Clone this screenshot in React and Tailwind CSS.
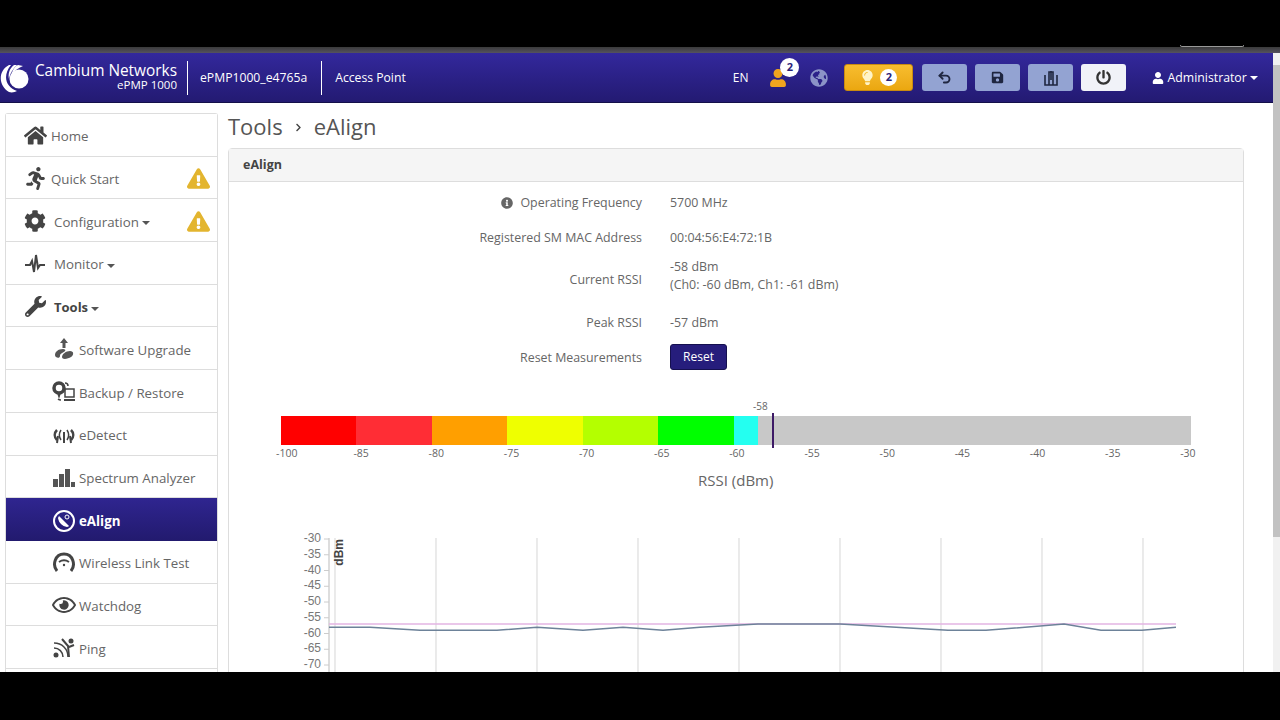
import React from "react";
import { FaHome, FaRunning, FaCog, FaWrench, FaExclamationTriangle, FaUser, FaGlobeAmericas, FaLightbulb, FaSave, FaPowerOff, FaInfoCircle, FaRegEye, FaChevronRight } from "react-icons/fa";
import { Undo2 } from "lucide-react";

const font = "font-['Open_Sans',sans-serif]";

function Caret({ className = "" }) {
  return <span className={`inline-block w-0 h-0 ml-[3px] align-middle border-x-[4px] border-x-transparent border-t-[4px] ${className}`} />;
}

function Logo() {
  return (
    <svg width="30" height="30" viewBox="0 0 30 30" className="shrink-0">
      <circle cx="19" cy="16" r="9.5" fill="#fff" />
      <path d="M9 2 C-2 8 -2 22 9 29 C12 30 15 29 17 28 C6 24 2 13 11 2Z" fill="#fff" />
      <path d="M14 2 C9 6 8 11 9 16 C10 10 13 6 17 2Z" fill="#fff" />
      <path d="M18 2 C14 4 12 8 12 11 C14 8 18 5 23 3Z" fill="#fff" />
    </svg>
  );
}

function Pulse() {
  return (
    <svg width="22" height="22" viewBox="0 0 22 22"><path d="M1 12h5l2-4 2 11 2-17 2 13 2-3h5" fill="none" stroke="#444" strokeWidth="2" /></svg>
  );
}

function Upgrade() {
  return (
    <svg width="24" height="24" viewBox="0 0 24 24" fill="#555">
      <path d="M12 1l4 5h-2.5v5h-3V6H8z" />
      <path d="M3 18c0-3 3-6 8-6 2 0 3 1 2 2-2 2-5 2-5 5 0 3-5 2-5-1z" />
      <path d="M10 20c0-3 4-6 8-6 4 0 4 4 1 6-3 2-9 3-9 0z" />
    </svg>
  );
}

function Backup() {
  return (
    <svg width="24" height="24" viewBox="0 0 24 24">
      <circle cx="7" cy="8" r="5" fill="none" stroke="#444" strokeWidth="3.5" />
      <path d="M5 13l2 6 2-6z" fill="#444" />
      <path d="M13 3c2 0 3 1 3 3M9 20c-2 0-3-1-3-1" fill="none" stroke="#444" strokeWidth="1.5" />
      <rect x="13" y="9" width="9" height="8" fill="none" stroke="#444" strokeWidth="1.5" />
      <path d="M12 20h11" stroke="#444" strokeWidth="2" />
    </svg>
  );
}

function Detect() {
  return (
    <svg width="24" height="24" viewBox="0 0 24 24" fill="none" stroke="#444">
      <path d="M5 7C2 10 2 14 5 17M19 7c3 3 3 7 0 10" strokeWidth="2.5" />
      <path d="M9 7c-2 3-2 7 0 10M15 7c2 3 2 7 0 10" strokeWidth="1.5" />
      <path d="M12 9v11M6 13l-1 7M18 13l1 7" strokeWidth="2" />
    </svg>
  );
}

function Spectrum() {
  return (
    <svg width="24" height="24" viewBox="0 0 24 24" fill="#555">
      <rect x="1" y="14" width="5" height="8" />
      <rect x="7" y="9" width="5" height="13" />
      <rect x="13" y="4" width="5" height="18" />
      <rect x="19" y="17" width="4" height="5" />
    </svg>
  );
}

function Dish() {
  return (
    <svg width="24" height="24" viewBox="0 0 24 24">
      <circle cx="12" cy="12" r="10" fill="none" stroke="#fff" strokeWidth="2" />
      <path d="M6 9c1 5 4 8 9 9 1 0 2-1 2-1L7 7z" fill="#fff" />
      <circle cx="15" cy="8" r="2" fill="none" stroke="#fff" strokeWidth="1" />
    </svg>
  );
}

function Gauge() {
  return (
    <svg width="24" height="24" viewBox="0 0 24 24" fill="none" stroke="#444">
      <path d="M5 20C0 14 3 3 12 3s12 11 7 17" strokeWidth="3" />
      <path d="M7 11c3-2 7-2 10 0" strokeWidth="2" />
      <circle cx="12" cy="14" r="1.2" fill="#444" stroke="none" />
    </svg>
  );
}

function Ping() {
  return (
    <svg width="24" height="24" viewBox="0 0 24 24" fill="none" stroke="#444" strokeWidth="1.5">
      <circle cx="4" cy="19" r="2.5" fill="#444" stroke="none" />
      <path d="M2 12c5 0 9 4 9 9M2 7c8 0 14 6 14 14" />
      <circle cx="19" cy="5" r="2.5" fill="#444" stroke="none" />
      <path d="M10 3l6 7 1 11M22 9l-5 2" strokeWidth="2" />
    </svg>
  );
}

const menu = [
  { label: "Home", icon: <FaHome size={23} color="#444" />, gap: "ml-[4px]" },
  { label: "Quick Start", icon: <FaRunning size={23} color="#444" />, gap: "ml-[4px]", warn: true },
  { label: "Configuration", icon: <FaCog size={22} color="#444" />, gap: "ml-[7px]", warn: true, caret: true },
  { label: "Monitor", icon: <Pulse />, gap: "ml-[7px]", caret: true },
  { label: "Tools", icon: <FaWrench size={21} color="#444" />, gap: "ml-[7px]", caret: true, bold: true },
  { label: "Software Upgrade", icon: <Upgrade />, sub: true },
  { label: "Backup / Restore", icon: <Backup />, sub: true },
  { label: "eDetect", icon: <Detect />, sub: true },
  { label: "Spectrum Analyzer", icon: <Spectrum />, sub: true },
  { label: "eAlign", icon: <Dish />, sub: true, active: true },
  { label: "Wireless Link Test", icon: <Gauge />, sub: true },
  { label: "Watchdog", icon: <FaRegEye size={24} color="#444" />, sub: true },
  { label: "Ping", icon: <Ping />, sub: true },
];

function MenuRow({ item }) {
  const pad = item.sub ? "pl-[46px]" : "pl-[17px]";
  const look = item.active
    ? "bg-gradient-to-b from-[#2f2590] to-[#221a6e] text-white font-bold"
    : "bg-white text-[#666] border-b border-[#ddd]";
  return (
    <div className={`flex items-center h-[42.7px] shrink-0 pt-[2px] text-[13.3px] ${pad} ${look}`}>
      <span className="w-[24px] flex justify-center shrink-0">{item.icon}</span>
      <span className={`pt-[3px] ${item.gap || "ml-[3px]"} ${item.bold ? "font-bold text-[#444] text-[13px]" : ""}`}>
        {item.label}
        {item.caret && <Caret className="border-t-[#555]" />}
      </span>
      {item.warn && <FaExclamationTriangle size={23} color="#e3b52f" className="ml-auto mr-[7px]" />}
    </div>
  );
}

const rows = [
  { label: "Operating Frequency", value: "5700 MHz", info: true, h: "h-[35px]" },
  { label: "Registered SM MAC Address", value: "00:04:56:E4:72:1B", h: "h-[35px]" },
  { label: "Current RSSI", value: "-58 dBm", second: "(Ch0: -60 dBm, Ch1: -61 dBm)", h: "h-[50px]" },
  { label: "Peak RSSI", value: "-57 dBm", h: "h-[35px]" },
];

const segments = [
  ["w-[75px]", "bg-[#ff0000]"],
  ["w-[76px]", "bg-[#ff2d35]"],
  ["w-[75px]", "bg-[#ff9f00]"],
  ["w-[76px]", "bg-[#efff00]"],
  ["w-[75px]", "bg-[#b4ff00]"],
  ["w-[76px]", "bg-[#00ff00]"],
  ["w-[24px]", "bg-[#24fff0]"],
  ["flex-1", "bg-[#c8c8c8]"],
];

const ticks = ["-100", "-85", "-80", "-75", "-70", "-65", "-60", "-55", "-50", "-45", "-40", "-35", "-30"];
const yTicks = [-30, -35, -40, -45, -50, -55, -60, -65, -70];
const gridX = [335, 436, 537, 638, 739, 840, 941, 1042, 1143];

const dbm = (v) => 538 + (-30 - v) * 3.15;
const series = [
  [329, -58], [370, -58], [420, -59], [497, -59], [537, -58], [583, -59], [623, -58], [663, -59],
  [700, -58], [758, -57], [840, -57], [948, -59], [986, -59], [1064, -57], [1101, -59], [1142, -59], [1176, -58],
];

function Chart() {
  // svg starts at x=229 of the page, y=530
  const pts = series.map(([x, v]) => `${x - 229},${dbm(v) - 530}`).join(" ");
  return (
    <svg width="1014" height="170" className="block">
      {gridX.map((x) => (
        <line key={x} x1={x - 229} x2={x - 229} y1="7" y2="170" stroke="#ddd" strokeWidth="1.2" />
      ))}
      <line x1="100" x2="100" y1="7" y2="170" stroke="#bbb" />
      {yTicks.map((v) => (
        <g key={v}>
          <line x1="95" x2="100" y1={dbm(v) - 530} y2={dbm(v) - 530} stroke="#ccc" />
          <text x="92" y={dbm(v) - 527} textAnchor="end" fontSize="12" fill="#777" fontFamily="Liberation Sans">{v}</text>
        </g>
      ))}
      <text transform="translate(114 8) rotate(-90)" textAnchor="end" fontSize="12" fontWeight="bold" fill="#444" fontFamily="Liberation Sans">dBm</text>
      <line x1="100" x2="947" y1={dbm(-57) - 530} y2={dbm(-57) - 530} stroke="#e3b4e3" strokeWidth="1.5" />
      <polyline points={pts} fill="none" stroke="#6d8299" strokeWidth="1.5" />
    </svg>
  );
}

export default function App() {
  return (
    <div className={`w-[1280px] h-[720px] overflow-hidden bg-black flex flex-col ${font}`}>
      <div className="h-[47px] shrink-0 relative">
        <div className="absolute left-[1180px] bottom-0 w-[64px] h-[2px] border-b border-x border-[#999] rounded-b-md" />
      </div>
      <div className="h-[6px] shrink-0 bg-gradient-to-b from-[#3a3a3a] to-[#55525f]" />

      <div className="h-[619px] shrink-0 flex">
        <div className="w-[1273px] flex flex-col overflow-hidden bg-white">
          {/* navbar */}
          <div className="h-[50px] shrink-0 flex items-center bg-gradient-to-b from-[#33289c] to-[#231a72] border-b border-[#14104a] text-white">
            <div className="flex items-center">
              <Logo />
              <div className="ml-[3px] w-[144px] text-right">
                <div className="text-[15.4px] font-medium leading-[14px] whitespace-nowrap">Cambium Networks</div>
                <div className="text-[11.5px] leading-[14px]">ePMP 1000</div>
              </div>
            </div>
            <div className="ml-[10px] h-[34px] w-px bg-white" />
            <div className="ml-[12px] pt-[2px] text-[12.2px] font-medium">ePMP1000_e4765a</div>
            <div className="ml-[14px] h-[34px] w-px bg-white" />
            <div className="ml-[13px] pt-[2px] text-[12.2px] font-medium">Access Point</div>

            <div className="ml-[327px] text-[12px] font-medium">EN</div>
            <div className="ml-[21px] relative">
              <FaUser size={18} color="#f0a41e" />
              <span className="absolute -top-[11px] left-[11px] w-[19px] h-[19px] rounded-full bg-white text-[#2a2178] text-[11px] font-bold flex items-center justify-center">2</span>
            </div>
            <FaGlobeAmericas size={18} color="#8b93c7" className="ml-[23px]" />
            <div className="ml-[16px] w-[69px] h-[27px] rounded-[3px] bg-gradient-to-b from-[#f7bd2e] to-[#eba70f] flex items-center justify-center gap-[5px] border border-[#c98b10]">
              <FaLightbulb size={15} color="#fff4c8" />
              <span className="w-[17px] h-[17px] rounded-full bg-white text-[#2a2178] text-[11px] font-bold flex items-center justify-center">2</span>
            </div>
            <div className="ml-[9px] w-[45px] h-[27px] rounded-[3px] bg-[#93a3d2] flex items-center justify-center"><Undo2 size={15} strokeWidth={3} color="#1f2640" /></div>
            <div className="ml-[8px] w-[45px] h-[27px] rounded-[3px] bg-[#93a3d2] flex items-center justify-center"><FaSave size={13} color="#1f2640" /></div>
            <div className="ml-[8px] w-[45px] h-[27px] rounded-[3px] bg-[#93a3d2] flex items-center justify-center">
              <svg width="14" height="16" viewBox="0 0 14 16" fill="none" stroke="#1f2640" strokeWidth="1.6"><path d="M1 5v10h12V5M5 15V2h4v13" /><path d="M7 1v9" /></svg>
            </div>
            <div className="ml-[8px] w-[45px] h-[27px] rounded-[3px] bg-[#f1f2f8] flex items-center justify-center"><FaPowerOff size={15} color="#333" /></div>
            <div className="ml-[26px] flex items-center text-[12.3px] font-medium whitespace-nowrap pt-[1px]">
              <FaUser size={12} className="mr-[3px]" />
              Administrator
              <Caret className="border-t-white" />
            </div>
          </div>

          {/* page */}
          <div className="flex-1 flex overflow-hidden">
            <div className="ml-[5px] mt-[10px] w-[213px] shrink-0 flex flex-col border-x border-t border-[#ddd] rounded-t-[3px] self-start">
              {menu.map((item) => (
                <MenuRow key={item.label} item={item} />
              ))}
              <div className="h-[20px] bg-white" />
            </div>

            <div className="ml-[10px] w-[1016px] shrink-0 bg-white">
              <div className="h-[45px] flex items-center text-[22px] text-[#555] leading-none pt-[1px]">
                Tools
                <FaChevronRight size={9} color="#444" className="mx-[11px] mt-[3px]" />
                eAlign
              </div>
              <div className="border border-[#ddd] rounded-t-[4px]">
                <div className="h-[33px] flex items-center pl-[14px] bg-[#f5f5f5] border-b border-[#ddd] text-[12.5px] font-bold text-[#444]">eAlign</div>
                <div className="pt-[3px]">
                  {rows.map((r) => (
                    <div key={r.label} className={`flex items-center text-[12.4px] leading-[18px] text-[#666] ${r.h}`}>
                      <div className="w-[413px] flex items-center justify-end">
                        {r.info && <FaInfoCircle size={12} color="#666" className="mr-[7px]" />}
                        {r.label}
                      </div>
                      <div className={`ml-[28px] ${r.second ? "mb-[8px]" : ""}`}>
                        <div>{r.value}</div>
                        {r.second && <div>{r.second}</div>}
                      </div>
                    </div>
                  ))}
                  <div className="flex items-center h-[35px] text-[12.4px] leading-[18px] text-[#666]">
                    <div className="w-[413px] text-right">Reset Measurements</div>
                    <button className="ml-[28px] mb-[2px] w-[57px] h-[26px] rounded-[3px] bg-[#261d7c] border border-[#15104f] text-white text-[12px]">Reset</button>
                  </div>

                  {/* rssi bar */}
                  <div className="mt-[41px] ml-[52px] w-[910px] h-[29px] flex relative">
                    {segments.map(([w, c]) => (
                      <div key={c} className={`${w} ${c}`} />
                    ))}
                    <div className="absolute left-[491px] -top-[3px] w-[2px] h-[35px] bg-[#3d1a66]" />
                    <span className="absolute left-[472px] -top-[15px] text-[10px] leading-none text-[#666]">-58</span>
                  </div>
                  <div className="ml-[47px] w-[922px] mt-[1px] flex justify-between text-[10.5px] leading-[14px] text-[#666]">
                    {ticks.map((t) => (
                      <span key={t} className="w-[20px] text-center">{t}</span>
                    ))}
                  </div>
                  <div className="mt-[10px] ml-[469px] text-[15px] leading-[20px] text-[#666]">RSSI (dBm)</div>
                  <div className="mt-[41px]">
                    <Chart />
                  </div>
                </div>
              </div>
            </div>
          </div>
        </div>

        {/* scrollbar */}
        <div className="w-[7px] shrink-0 bg-[#f1f1f1] flex flex-col">
          <div className="h-[12px] shrink-0" />
          <div className="h-[472px] bg-[#c2c2c2]" />
        </div>
      </div>
      <div className="flex-1" />
    </div>
  );
}
